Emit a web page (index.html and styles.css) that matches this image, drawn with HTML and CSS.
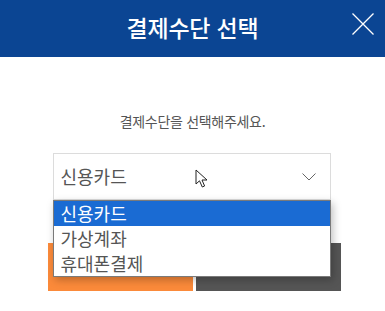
FILE: index.html
```html
<!DOCTYPE html>
<html lang="ko">
<head>
    <meta charset="UTF-8">
    <meta name="viewport" content="width=device-width, initial-scale=1.0">
    <title>결제수단 선택</title>
    <link rel="stylesheet" href="styles.css">
</head>
<body>
    <div class="pay-popup">
        <!-- Header -->
        <div class="pay-header">
            <div class="pay-title">결제수단 선택</div>
            <button class="pay-close" aria-label="닫기">
                <svg width="22" height="22" viewBox="0 0 22 22">
                    <path d="M0.5 0.5 L21.5 21.5 M21.5 0.5 L0.5 21.5" stroke="#fff" stroke-width="1.3" fill="none"/>
                </svg>
            </button>
        </div>

        <!-- Body -->
        <div class="pay-body">
            <p class="pay-guide">결제수단을 선택해주세요.</p>

            <div class="pay-select">
                <div class="pay-select-value">
                    <span>신용카드</span>
                    <svg class="pay-chevron" width="14" height="8" viewBox="0 0 14 8">
                        <path d="M0.5 0.5 L7 7 L13.5 0.5" stroke="#666" stroke-width="1" fill="none"/>
                    </svg>
                </div>
                <ul class="pay-options">
                    <li class="pay-option selected">신용카드</li>
                    <li class="pay-option">가상계좌</li>
                    <li class="pay-option">휴대폰결제</li>
                </ul>
                <svg class="pay-cursor" width="14" height="20" viewBox="0 0 14 20">
                    <path d="M1 1 L1 15 L4.5 11.8 L7.3 18 L9.6 17 L7 11 L12 11 Z" fill="#fff" stroke="#222" stroke-width="1" stroke-linejoin="round"/>
                </svg>
            </div>

            <!-- Buttons sit under the open list; labels kept for screen readers -->
            <div class="pay-buttons">
                <button class="pay-btn pay-btn-ok" aria-label="확인"></button>
                <button class="pay-btn pay-btn-cancel" aria-label="취소"></button>
            </div>
        </div>
    </div>
</body>
</html>
```

FILE: styles.css
```css
/* Payment method popup */
body {
    margin: 0;
    background: #fff;
    font-family: "Noto Sans CJK KR", "Noto Sans", sans-serif;
}

.pay-popup {
    width: 385px;
    height: 311px;
    overflow: hidden;
}

/* Header */
.pay-header {
    position: relative;
    height: 57px;
    background: #0b4593;
    display: flex;
    align-items: center;
    justify-content: center;
}

.pay-title {
    color: #fff;
    font-size: 23px;
    font-weight: 500;
    letter-spacing: -0.2px;
    margin-top: -4px;
}

.pay-close {
    position: absolute;
    right: 11px;
    top: 13px;
    background: none;
    border: none;
    padding: 0;
    width: 22px;
    height: 22px;
    cursor: pointer;
}

.pay-close svg {
    display: block;
}

/* Body */
.pay-body {
    display: flex;
    flex-direction: column;
    align-items: center;
}

.pay-guide {
    margin: 54px 0 0 0;
    height: 20px;
    line-height: 20px;
    font-size: 14px;
    color: #555;
    letter-spacing: -0.3px;
}

/* Select box */
.pay-select {
    position: relative;
    width: 278px;
    margin-top: 22px;
    margin-left: -2px;
    z-index: 2;
}

.pay-select-value {
    height: 45px;
    border: 1px solid #dcdcdc;
    display: flex;
    align-items: center;
    justify-content: space-between;
    padding: 0 14px 0 7px;
    font-size: 18px;
    color: #555;
}

.pay-select-value span {
    margin-top: -1px;
}

.pay-chevron {
    display: block;
}

.pay-options {
    position: absolute;
    top: 47px;
    left: 0;
    width: 276px;
    margin: 0;
    padding: 0;
    list-style: none;
    background: #fff;
    border: 1px solid #7a7a7a;
    box-shadow: 2px 3px 8px rgba(0, 0, 0, 0.25);
}

.pay-option {
    height: 25px;
    line-height: 24px;
    padding-left: 7px;
    font-size: 18px;
    color: #555;
}

.pay-option.selected {
    background: #1a6bd3;
    color: #fff;
}

.pay-cursor {
    position: absolute;
    left: 142px;
    top: 16px;
}

/* Buttons */
.pay-buttons {
    display: flex;
    gap: 3px;
    margin-top: 43px;
    margin-left: 4px;
}

.pay-btn {
    width: 145px;
    height: 48px;
    border: none;
    padding: 0;
}

.pay-btn-ok {
    background: #fb8a3a;
}

.pay-btn-cancel {
    background: #555;
}
```
